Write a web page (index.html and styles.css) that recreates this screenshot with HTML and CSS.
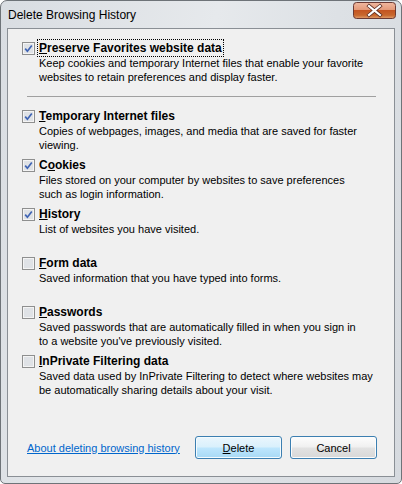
FILE: index.html
```html
<!DOCTYPE html>
<html>
<head>
<meta charset="utf-8">
<link rel="stylesheet" href="styles.css">
</head>
<body>
<div class="window">
  <div class="titlebar">
    <span class="title">Delete Browsing History</span>
    <div class="close">
      <svg width="43" height="17" viewBox="0 0 43 17">
        <defs>
          <linearGradient id="cg" x1="0" y1="0" x2="0" y2="1">
            <stop offset="0" stop-color="#f0b8a0"/>
            <stop offset="0.45" stop-color="#e49a7a"/>
            <stop offset="0.5" stop-color="#c45522"/>
            <stop offset="0.8" stop-color="#c8682e"/>
            <stop offset="1" stop-color="#e2a070"/>
          </linearGradient>
        </defs>
        <rect x="0.5" y="0.5" width="42" height="16" rx="3" fill="url(#cg)" stroke="#6b3a34"/>
        <path d="M16 4 L27 13 M27 4 L16 13" stroke="#5a2a20" stroke-width="3.6" stroke-linecap="square"/>
        <path d="M16 4 L27 13 M27 4 L16 13" stroke="#ffffff" stroke-width="2.2" stroke-linecap="square"/>
      </svg>
    </div>
  </div>
  <div class="client">
    <div class="item">
      <span class="cb checked"><svg width="13" height="13" viewBox="0 0 13 13"><rect x="0.5" y="0.5" width="12" height="12" fill="#f4f4f4" stroke="#8e8f8f"/><rect x="2" y="2" width="9" height="9" fill="#dfe2e6"/><path d="M3.2 6.6 L5.4 9.2 L9.8 3.4" fill="none" stroke="#3f64b4" stroke-width="1.7"/></svg></span>
      <span class="label"><span class="focus"><u>P</u>reserve Favorites website data</span></span>
      <span class="desc">Keep cookies and temporary Internet files that enable your favorite<br>websites to retain preferences and display faster.</span>
    </div>
    <div class="sep"></div>
    <div class="item">
      <span class="cb checked"><svg width="13" height="13" viewBox="0 0 13 13"><rect x="0.5" y="0.5" width="12" height="12" fill="#f4f4f4" stroke="#8e8f8f"/><rect x="2" y="2" width="9" height="9" fill="#dfe2e6"/><path d="M3.2 6.6 L5.4 9.2 L9.8 3.4" fill="none" stroke="#3f64b4" stroke-width="1.7"/></svg></span>
      <span class="label"><u>T</u>emporary Internet files</span>
      <span class="desc">Copies of webpages, images, and media that are saved for faster<br>viewing.</span>
    </div>
    <div class="item">
      <span class="cb checked"><svg width="13" height="13" viewBox="0 0 13 13"><rect x="0.5" y="0.5" width="12" height="12" fill="#f4f4f4" stroke="#8e8f8f"/><rect x="2" y="2" width="9" height="9" fill="#dfe2e6"/><path d="M3.2 6.6 L5.4 9.2 L9.8 3.4" fill="none" stroke="#3f64b4" stroke-width="1.7"/></svg></span>
      <span class="label">C<u>o</u>okies</span>
      <span class="desc">Files stored on your computer by websites to save preferences<br>such as login information.</span>
    </div>
    <div class="item">
      <span class="cb checked"><svg width="13" height="13" viewBox="0 0 13 13"><rect x="0.5" y="0.5" width="12" height="12" fill="#f4f4f4" stroke="#8e8f8f"/><rect x="2" y="2" width="9" height="9" fill="#dfe2e6"/><path d="M3.2 6.6 L5.4 9.2 L9.8 3.4" fill="none" stroke="#3f64b4" stroke-width="1.7"/></svg></span>
      <span class="label"><u>H</u>istory</span>
      <span class="desc">List of websites you have visited.</span>
    </div>
    <div class="item">
      <span class="cb"><svg width="13" height="13" viewBox="0 0 13 13"><rect x="0.5" y="0.5" width="12" height="12" fill="#f4f4f4" stroke="#8e8f8f"/><rect x="2" y="2" width="9" height="9" fill="#dfe2e6"/></svg></span>
      <span class="label"><u>F</u>orm data</span>
      <span class="desc">Saved information that you have typed into forms.</span>
    </div>
    <div class="item">
      <span class="cb"><svg width="13" height="13" viewBox="0 0 13 13"><rect x="0.5" y="0.5" width="12" height="12" fill="#f4f4f4" stroke="#8e8f8f"/><rect x="2" y="2" width="9" height="9" fill="#dfe2e6"/></svg></span>
      <span class="label"><u>P</u>asswords</span>
      <span class="desc">Saved passwords that are automatically filled in when you sign in<br>to a website you've previously visited.</span>
    </div>
    <div class="item">
      <span class="cb"><svg width="13" height="13" viewBox="0 0 13 13"><rect x="0.5" y="0.5" width="12" height="12" fill="#f4f4f4" stroke="#8e8f8f"/><rect x="2" y="2" width="9" height="9" fill="#dfe2e6"/></svg></span>
      <span class="label"><u>I</u>nPrivate Filtering data</span>
      <span class="desc">Saved data used by InPrivate Filtering to detect where websites may<br>be automatically sharing details about your visit.</span>
    </div>
    <div class="footer">
      <a class="link" href="#">About deleting browsing history</a>
      <button class="btn btn-default"><u>D</u>elete</button>
      <button class="btn">Cancel</button>
    </div>
  </div>
</div>
</body>
</html>
```
FILE: styles.css
```css
html, body {
  margin: 0;
  padding: 0;
  background: #ffffff;
}
body {
  font-family: "Liberation Sans", Arial, sans-serif;
  font-size: 11px;
  color: #000;
}
.window {
  box-sizing: border-box;
  width: 402px;
  height: 484px;
  border: 1px solid #6e7378;
  border-radius: 7px 7px 5px 5px;
  background: linear-gradient(100deg, #d9dde2 0%, #e6e9ec 45%, #dde1e5 70%, #d6dadf 100%);
  display: flex;
  flex-direction: column;
}
.titlebar {
  height: 27px;
  display: flex;
  justify-content: space-between;
  align-items: flex-start;
  padding: 0 5px 0 7px;
}
.title {
  font-size: 12px;
  line-height: 14px;
  margin-top: 7px;
  color: #000;
}
.close {
  margin-top: 1px;
  height: 17px;
}
.close svg {
  display: block;
}
.client {
  box-sizing: border-box;
  margin: 0 6px 6px 6px;
  height: 449px;
  border: 1px solid #8a8f95;
  background: #f0f0f0;
  display: flex;
  flex-direction: column;
  padding: 11px 0 0 14px;
}
.item {
  display: grid;
  grid-template-columns: 13px auto;
  column-gap: 4px;
  height: 49px;
  align-content: start;
}
.cb {
  grid-column: 1;
  grid-row: 1;
  height: 16px;
  display: flex;
  align-items: center;
}
.cb svg {
  display: block;
}
.label {
  grid-column: 2;
  grid-row: 1;
  font-weight: bold;
  font-size: 12px;
  line-height: 16px;
  white-space: nowrap;
}
.focus {
  display: inline-block;
  margin: -1px -2px;
  padding: 0 1px;
  border: 1px dotted #000;
  line-height: 16px;
}
.desc {
  grid-column: 2;
  grid-row: 2;
  line-height: 14px;
  white-space: nowrap;
}
.item:first-child {
  height: 44px;
}
.sep {
  height: 1px;
  background: #a0a0a0;
  margin: 12px 18px 11px 5px;
}
.footer {
  margin-top: auto;
  display: flex;
  align-items: center;
  padding: 0 17px 17px 5px;
  gap: 8px;
}
.link {
  color: #0066cc;
  text-decoration: underline;
  margin-right: auto;
}
.btn {
  box-sizing: border-box;
  width: 87px;
  height: 23px;
  font-family: "Liberation Sans", Arial, sans-serif;
  font-size: 11px;
  color: #000;
  border: 1px solid #3c7fb1;
  border-radius: 3px;
  padding: 0;
  background: linear-gradient(#fdfdfd 0%, #f0f0f0 48%, #e2e2e2 52%, #d8d8d8 100%);
  box-shadow: inset 0 0 0 1px #fcfcfc;
}
.btn-default {
  background: linear-gradient(#eaf6fd 0%, #d9f0fc 48%, #bee6fd 52%, #a7d9f5 100%);
  box-shadow: inset 0 0 0 1px #f4fbfe;
}
```
